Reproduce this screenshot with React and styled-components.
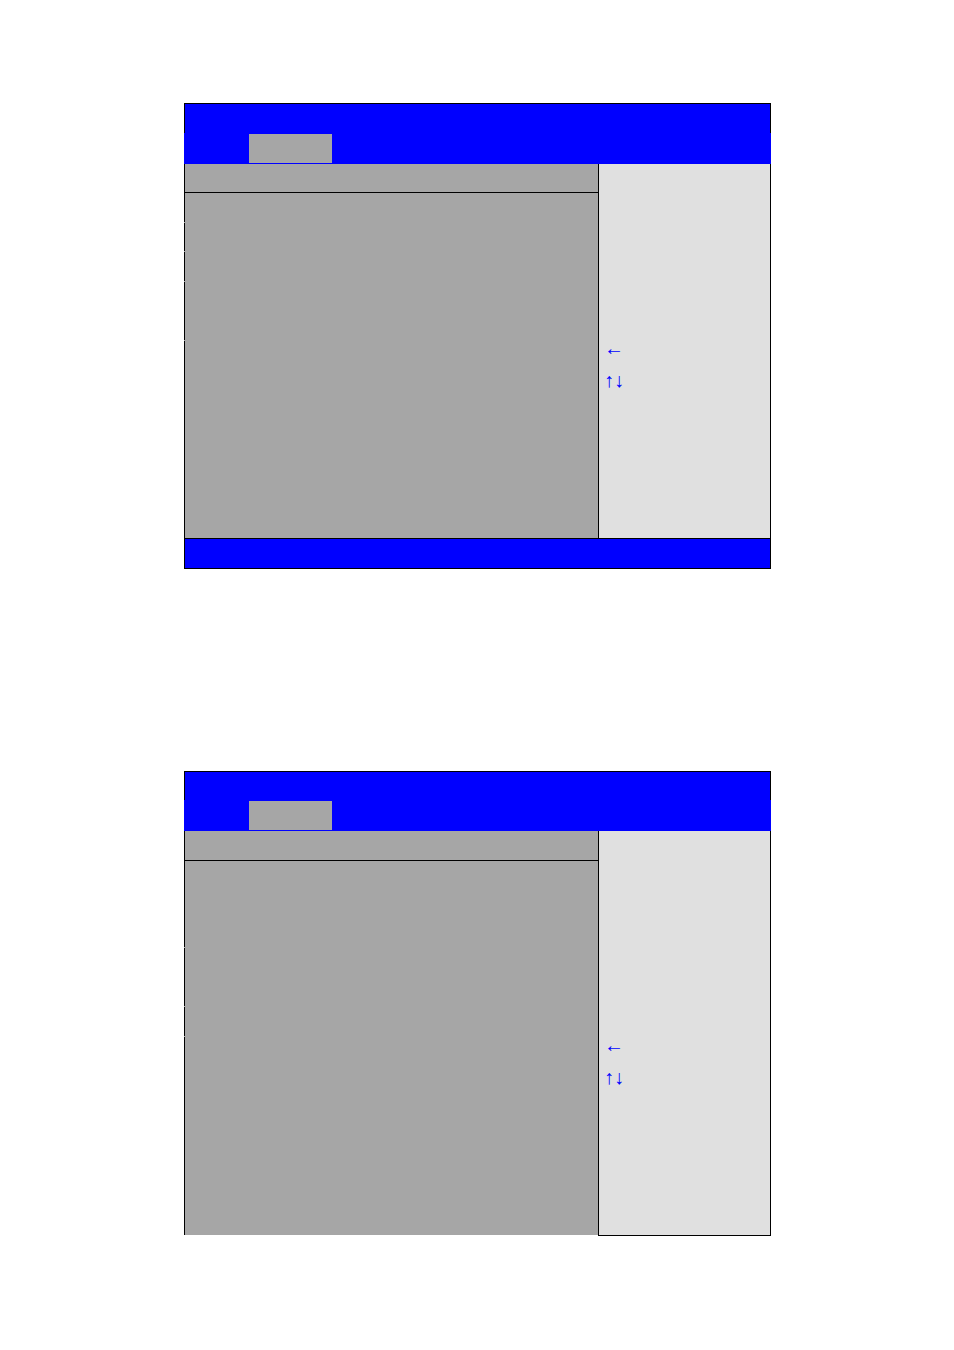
import React from "react";
import styled, { createGlobalStyle } from "styled-components";

const screens = [
  {
    name: "Setup screen 1",
    titleHeight: 30,
    headingHeight: 29,
    sections: [29, 28, 29, 58, 197],
    keysTop: 168,
    footer: true,
  },
  {
    name: "Setup screen 2",
    titleHeight: 29,
    headingHeight: 30,
    sections: [86, 58, 29, 198],
    keysTop: 198,
    footer: false,
  },
];

const SetupScreen = ({ screen }) => (
  <Screen aria-label={screen.name}>
    <TitleBar height={screen.titleHeight} />
    <TabBar>
      <Tab type="button" aria-label="Selected tab" />
    </TabBar>
    <Body>
      <Main $open={!screen.footer}>
        <Heading height={screen.headingHeight} />
        {screen.sections.map((height, i) => (
          <Section key={i} height={height} />
        ))}
      </Main>
      <Side $top={screen.keysTop} $open={!screen.footer}>
        <Keys>←</Keys>
        <Keys>↑↓</Keys>
      </Side>
    </Body>
    {screen.footer && <Footer />}
  </Screen>
);

const App = () => (
  <React.Fragment>
    <GlobalStyle />
    <Page>
      {screens.map((screen) => (
        <SetupScreen key={screen.name} screen={screen} />
      ))}
    </Page>
  </React.Fragment>
);

export default App;

const GlobalStyle = createGlobalStyle`
  * {
    box-sizing: border-box;
  }
  body {
    margin: 0;
    background: #fff;
    font-family: "Liberation Serif", "Times New Roman", serif;
  }
`;

const Page = styled.main`
  display: flex;
  flex-direction: column;
  gap: 202px;
  padding: 103px 183px 114px 184px;
`;

const Screen = styled.section`
  display: flex;
  flex-direction: column;
`;

const TitleBar = styled.header.withConfig({
  shouldForwardProp: (prop) => prop !== "height",
})`
  height: ${(props) => props.height}px;
  background: #00f;
  border: 1px solid #000;
  border-bottom: 0;
`;

const TabBar = styled.nav`
  display: flex;
  padding: 1px 65px;
  background: #00f;
`;

const Tab = styled.button`
  width: 83px;
  height: 29px;
  padding: 0;
  border: 0;
  background: #a6a6a6;
`;

const Body = styled.div`
  display: flex;
`;

const Main = styled.div`
  flex: 1;
  display: flex;
  flex-direction: column;
  background: #a6a6a6;
  border-bottom: ${(props) => (props.$open ? "1px solid #fff" : "0")};
`;

const Heading = styled.div.withConfig({
  shouldForwardProp: (prop) => prop !== "height",
})`
  height: ${(props) => props.height}px;
  border-left: 1px solid #000;
  border-bottom: 1px solid #000;
`;

/* the frame line breaks for one pixel between sections */
const Section = styled.div.withConfig({
  shouldForwardProp: (prop) => prop !== "height",
})`
  height: ${(props) => props.height}px;
  border-left: 1px solid #000;
  & + & {
    margin-top: 1px;
  }
`;

const Side = styled.aside`
  width: 173px;
  padding: ${(props) => props.$top}px 5px 0;
  background: #e0e0e0;
  border: solid #000;
  border-width: 0 1px ${(props) => (props.$open ? "1px" : "0")};
`;

const Keys = styled.div`
  color: #00f;
  font-size: 20px;
  line-height: 32px;
`;

const Footer = styled.footer`
  height: 31px;
  background: #00f;
  border: 1px solid #000;
`;
